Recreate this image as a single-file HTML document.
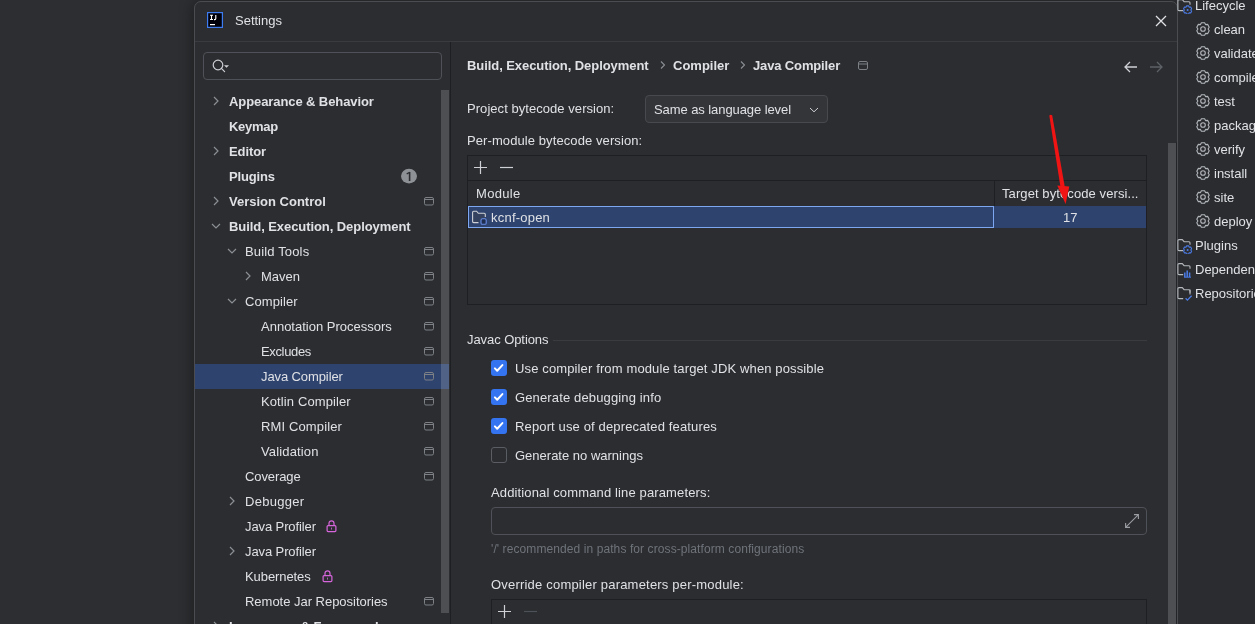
<!DOCTYPE html>
<html><head><meta charset="utf-8">
<style>
*{box-sizing:border-box;margin:0;padding:0}
html,body{width:1255px;height:624px;overflow:hidden;-webkit-font-smoothing:antialiased;background:#2c2e31;font-family:"Liberation Sans",sans-serif;font-size:13px;color:#dfe1e5;position:relative}
.a{position:absolute;white-space:nowrap}
.t{position:absolute;white-space:nowrap;line-height:16px;will-change:transform}
.b{font-weight:bold}
</style></head><body>
<div class="a" style="left:194px;top:1px;width:984px;height:680px;background:#2b2d30;border:1px solid #4a4c51;border-radius:7px;box-shadow:-2px 0 14px rgba(0,0,0,0.32)"></div>

<!-- title -->
<svg class="a" style="left:207px;top:12px" width="16" height="16" viewBox="0 0 16 16"><rect x="0.6" y="0.6" width="14.8" height="14.8" fill="#00000a" stroke="#3d7cf0" stroke-width="1.2"/><path d="M3 3.2H6M4.5 3.2V7.5M3 7.5H6M8.8 3V6.6Q8.8 7.6 7.8 7.6H7" fill="none" stroke="#fff" stroke-width="1.1"/><rect x="3" y="12" width="5" height="1.2" fill="#fff"/></svg>
<div class="t" style="left:235px;top:13px">Settings</div>
<svg class="a" style="left:1155px;top:15px" width="12" height="12" viewBox="0 0 12 12"><path d="M1 1L11 11M11 1L1 11" stroke="#dfe1e5" stroke-width="1.3"/></svg>
<div class="a" style="left:195px;top:41px;width:982px;height:1px;background:#393b40"></div>

<!-- left panel -->
<div class="a" style="left:203px;top:52px;width:239px;height:28px;border:1px solid #4e5157;border-radius:4px"></div>
<svg class="a" style="left:212px;top:58px" width="20" height="16" viewBox="0 0 20 16"><circle cx="6" cy="7" r="4.8" fill="none" stroke="#ced0d6" stroke-width="1.2"/><path d="M9.4 10.4L12.6 13.6" stroke="#ced0d6" stroke-width="1.2" stroke-linecap="round"/><path d="M12 7.3H17L14.5 9.8Z" fill="#ced0d6"/></svg>
<svg class="a" style="left:212px;top:95px" width="8" height="12" viewBox="0 0 8 12"><path d="M2 2L6 6L2 10" fill="none" stroke="#8c8f94" stroke-width="1.2"/></svg>
<div class="t b" style="left:229px;top:94px;letter-spacing:-0.09px">Appearance &amp; Behavior</div>
<div class="t b" style="left:229px;top:119px;letter-spacing:-0.3px">Keymap</div>
<svg class="a" style="left:212px;top:145px" width="8" height="12" viewBox="0 0 8 12"><path d="M2 2L6 6L2 10" fill="none" stroke="#8c8f94" stroke-width="1.2"/></svg>
<div class="t b" style="left:229px;top:144px;letter-spacing:-0.08px">Editor</div>
<div class="t b" style="left:229px;top:169px;letter-spacing:-0.15px">Plugins</div>
<svg class="a" style="left:401px;top:168px" width="16" height="16" viewBox="0 0 16 16"><ellipse cx="8" cy="8.1" rx="8" ry="7.3" fill="#8e9196"/><path d="M8.6 4V13" stroke="#2b2d30" stroke-width="1.6"/><path d="M5.7 5.9L8.9 4.2" stroke="#2b2d30" stroke-width="1.2"/></svg>
<svg class="a" style="left:212px;top:195px" width="8" height="12" viewBox="0 0 8 12"><path d="M2 2L6 6L2 10" fill="none" stroke="#8c8f94" stroke-width="1.2"/></svg>
<div class="t b" style="left:229px;top:194px">Version Control</div>
<svg class="a" style="left:424px;top:197px" width="10" height="9" viewBox="0 0 10 9"><rect x="0.5" y="0.5" width="9" height="7.5" rx="1.5" fill="none" stroke="#7d8085" stroke-width="1"/><path d="M0.5 2.5H9.5" stroke="#7d8085" stroke-width="1"/></svg>
<svg class="a" style="left:210px;top:222px" width="12" height="8" viewBox="0 0 12 8"><path d="M2 2L6 6L10 2" fill="none" stroke="#8c8f94" stroke-width="1.2"/></svg>
<div class="t b" style="left:229px;top:219px;letter-spacing:-0.07px">Build, Execution, Deployment</div>
<svg class="a" style="left:226px;top:247px" width="12" height="8" viewBox="0 0 12 8"><path d="M2 2L6 6L10 2" fill="none" stroke="#8c8f94" stroke-width="1.2"/></svg>
<div class="t" style="left:245px;top:244px;letter-spacing:0.15px">Build Tools</div>
<svg class="a" style="left:424px;top:247px" width="10" height="9" viewBox="0 0 10 9"><rect x="0.5" y="0.5" width="9" height="7.5" rx="1.5" fill="none" stroke="#7d8085" stroke-width="1"/><path d="M0.5 2.5H9.5" stroke="#7d8085" stroke-width="1"/></svg>
<svg class="a" style="left:244px;top:270px" width="8" height="12" viewBox="0 0 8 12"><path d="M2 2L6 6L2 10" fill="none" stroke="#8c8f94" stroke-width="1.2"/></svg>
<div class="t" style="left:261px;top:269px">Maven</div>
<svg class="a" style="left:424px;top:272px" width="10" height="9" viewBox="0 0 10 9"><rect x="0.5" y="0.5" width="9" height="7.5" rx="1.5" fill="none" stroke="#7d8085" stroke-width="1"/><path d="M0.5 2.5H9.5" stroke="#7d8085" stroke-width="1"/></svg>
<svg class="a" style="left:226px;top:297px" width="12" height="8" viewBox="0 0 12 8"><path d="M2 2L6 6L10 2" fill="none" stroke="#8c8f94" stroke-width="1.2"/></svg>
<div class="t" style="left:245px;top:294px;letter-spacing:0.08px">Compiler</div>
<svg class="a" style="left:424px;top:297px" width="10" height="9" viewBox="0 0 10 9"><rect x="0.5" y="0.5" width="9" height="7.5" rx="1.5" fill="none" stroke="#7d8085" stroke-width="1"/><path d="M0.5 2.5H9.5" stroke="#7d8085" stroke-width="1"/></svg>
<div class="t" style="left:261px;top:319px">Annotation Processors</div>
<svg class="a" style="left:424px;top:322px" width="10" height="9" viewBox="0 0 10 9"><rect x="0.5" y="0.5" width="9" height="7.5" rx="1.5" fill="none" stroke="#7d8085" stroke-width="1"/><path d="M0.5 2.5H9.5" stroke="#7d8085" stroke-width="1"/></svg>
<div class="t" style="left:261px;top:344px;letter-spacing:-0.35px">Excludes</div>
<svg class="a" style="left:424px;top:347px" width="10" height="9" viewBox="0 0 10 9"><rect x="0.5" y="0.5" width="9" height="7.5" rx="1.5" fill="none" stroke="#7d8085" stroke-width="1"/><path d="M0.5 2.5H9.5" stroke="#7d8085" stroke-width="1"/></svg>
<div class="a" style="left:195px;top:364px;width:254px;height:25px;background:#2e436e"></div>
<div class="t" style="left:261px;top:369px;letter-spacing:-0.1px">Java Compiler</div>
<svg class="a" style="left:424px;top:372px" width="10" height="9" viewBox="0 0 10 9"><rect x="0.5" y="0.5" width="9" height="7.5" rx="1.5" fill="none" stroke="#7d8085" stroke-width="1"/><path d="M0.5 2.5H9.5" stroke="#7d8085" stroke-width="1"/></svg>
<div class="t" style="left:261px;top:394px;letter-spacing:0.11px">Kotlin Compiler</div>
<svg class="a" style="left:424px;top:397px" width="10" height="9" viewBox="0 0 10 9"><rect x="0.5" y="0.5" width="9" height="7.5" rx="1.5" fill="none" stroke="#7d8085" stroke-width="1"/><path d="M0.5 2.5H9.5" stroke="#7d8085" stroke-width="1"/></svg>
<div class="t" style="left:261px;top:419px;letter-spacing:0.13px">RMI Compiler</div>
<svg class="a" style="left:424px;top:422px" width="10" height="9" viewBox="0 0 10 9"><rect x="0.5" y="0.5" width="9" height="7.5" rx="1.5" fill="none" stroke="#7d8085" stroke-width="1"/><path d="M0.5 2.5H9.5" stroke="#7d8085" stroke-width="1"/></svg>
<div class="t" style="left:261px;top:444px;letter-spacing:0.14px">Validation</div>
<svg class="a" style="left:424px;top:447px" width="10" height="9" viewBox="0 0 10 9"><rect x="0.5" y="0.5" width="9" height="7.5" rx="1.5" fill="none" stroke="#7d8085" stroke-width="1"/><path d="M0.5 2.5H9.5" stroke="#7d8085" stroke-width="1"/></svg>
<div class="t" style="left:245px;top:469px;letter-spacing:-0.1px">Coverage</div>
<svg class="a" style="left:424px;top:472px" width="10" height="9" viewBox="0 0 10 9"><rect x="0.5" y="0.5" width="9" height="7.5" rx="1.5" fill="none" stroke="#7d8085" stroke-width="1"/><path d="M0.5 2.5H9.5" stroke="#7d8085" stroke-width="1"/></svg>
<svg class="a" style="left:228px;top:495px" width="8" height="12" viewBox="0 0 8 12"><path d="M2 2L6 6L2 10" fill="none" stroke="#8c8f94" stroke-width="1.2"/></svg>
<div class="t" style="left:245px;top:494px;letter-spacing:0.3px">Debugger</div>
<div class="t" style="left:245px;top:519px;letter-spacing:-0.1px">Java Profiler</div>
<svg class="a" style="left:326px;top:520px" width="11" height="13" viewBox="0 0 11 13"><path d="M3 5.5V3.3a2.5 2.5 0 0 1 5 0V5.5" fill="none" stroke="#d765dc" stroke-width="1.2"/><rect x="1.1" y="5.6" width="8.8" height="6" rx="1" fill="none" stroke="#d765dc" stroke-width="1.2"/><rect x="5" y="7.6" width="1" height="2" fill="#b05ab8"/></svg>
<svg class="a" style="left:228px;top:545px" width="8" height="12" viewBox="0 0 8 12"><path d="M2 2L6 6L2 10" fill="none" stroke="#8c8f94" stroke-width="1.2"/></svg>
<div class="t" style="left:245px;top:544px;letter-spacing:-0.1px">Java Profiler</div>
<div class="t" style="left:245px;top:569px;letter-spacing:-0.08px">Kubernetes</div>
<svg class="a" style="left:322px;top:570px" width="11" height="13" viewBox="0 0 11 13"><path d="M3 5.5V3.3a2.5 2.5 0 0 1 5 0V5.5" fill="none" stroke="#d765dc" stroke-width="1.2"/><rect x="1.1" y="5.6" width="8.8" height="6" rx="1" fill="none" stroke="#d765dc" stroke-width="1.2"/><rect x="5" y="7.6" width="1" height="2" fill="#b05ab8"/></svg>
<div class="t" style="left:245px;top:594px;letter-spacing:-0.02px">Remote Jar Repositories</div>
<svg class="a" style="left:424px;top:597px" width="10" height="9" viewBox="0 0 10 9"><rect x="0.5" y="0.5" width="9" height="7.5" rx="1.5" fill="none" stroke="#7d8085" stroke-width="1"/><path d="M0.5 2.5H9.5" stroke="#7d8085" stroke-width="1"/></svg>
<svg class="a" style="left:212px;top:620px" width="8" height="12" viewBox="0 0 8 12"><path d="M2 2L6 6L2 10" fill="none" stroke="#8c8f94" stroke-width="1.2"/></svg>
<div class="t b" style="left:229px;top:619px;letter-spacing:-0.07px">Languages &amp; Frameworks</div>
<div class="a" style="left:441px;top:90px;width:8px;height:523px;background:rgba(255,255,255,0.165)"></div>
<div class="a" style="left:450px;top:42px;width:1px;height:582px;background:#1e1f22"></div>

<!-- right panel -->
<div class="t b" style="left:467px;top:58px;letter-spacing:-0.07px">Build, Execution, Deployment</div>
<svg class="a" style="left:659px;top:59px" width="8" height="12" viewBox="0 0 8 12"><path d="M2 2.5L5.5 6L2 9.5" fill="none" stroke="#8c8f94" stroke-width="1.1"/></svg>
<div class="t b" style="left:673px;top:58px">Compiler</div>
<svg class="a" style="left:739px;top:59px" width="8" height="12" viewBox="0 0 8 12"><path d="M2 2.5L5.5 6L2 9.5" fill="none" stroke="#8c8f94" stroke-width="1.1"/></svg>
<div class="t b" style="left:753px;top:58px;letter-spacing:-0.14px">Java Compiler</div>
<svg class="a" style="left:858px;top:61px" width="10" height="9" viewBox="0 0 10 9"><rect x="0.5" y="0.5" width="9" height="8" rx="1.5" fill="none" stroke="#7d8085" stroke-width="1"/><path d="M0.5 3H9.5" stroke="#7d8085" stroke-width="1"/></svg>
<svg class="a" style="left:1123px;top:60px" width="15" height="14" viewBox="0 0 15 14"><path d="M2 7H14M7 2L2 7L7 12" fill="none" stroke="#ced0d6" stroke-width="1.3"/></svg>
<svg class="a" style="left:1149px;top:60px" width="15" height="14" viewBox="0 0 15 14"><path d="M1 7H13M8 2L13 7L8 12" fill="none" stroke="#5e6166" stroke-width="1.3"/></svg>

<div class="t" style="left:467px;top:101px;letter-spacing:0.05px">Project bytecode version:</div>
<div class="a" style="left:645px;top:95px;width:183px;height:28px;border:1px solid #47494e;border-radius:4px;background:#333539"></div>
<div class="t" style="left:654px;top:102px;letter-spacing:-0.08px">Same as language level</div>
<svg class="a" style="left:808px;top:106px" width="12" height="8" viewBox="0 0 12 8"><path d="M2 2L6 5.8L10 2" fill="none" stroke="#ced0d6" stroke-width="1"/></svg>

<div class="t" style="left:467px;top:133px;letter-spacing:0.09px">Per-module bytecode version:</div>
<div class="a" style="left:467px;top:155px;width:680px;height:150px;border:1px solid #1e1f22"></div>
<svg class="a" style="left:473px;top:160px" width="15" height="15" viewBox="0 0 15 15"><path d="M7.5 1V14M1 7.5H14" stroke="#ced0d6" stroke-width="1.2"/></svg>
<svg class="a" style="left:499px;top:160px" width="15" height="15" viewBox="0 0 15 15"><path d="M1 7.5H14" stroke="#ced0d6" stroke-width="1.2"/></svg>
<div class="a" style="left:468px;top:180px;width:678px;height:1px;background:#1e1f22"></div>
<div class="t" style="left:476px;top:186px;letter-spacing:0.3px">Module</div>
<div class="a" style="left:994px;top:181px;width:1px;height:25px;background:#1e1f22"></div>
<div class="t" style="left:1002px;top:186px;letter-spacing:0.09px">Target bytecode versi...</div>
<div class="a" style="left:468px;top:206px;width:678px;height:22px;background:#2e436e"></div>
<div class="a" style="left:468px;top:206px;width:526px;height:22px;border:1px solid #7ea7f2"></div>
<svg class="a" style="left:471px;top:209px" width="16" height="16" viewBox="0 0 16 16"><path d="M7.5 13.6H2.6Q1.6 13.6 1.6 12.6V3.2Q1.6 2.2 2.6 2.2H5.6L7.3 4.3H13.2Q14.3 4.3 14.3 5.3V8" fill="#34425f" stroke="#ced0d6" stroke-width="1.1"/><rect x="10" y="9.8" width="5.2" height="5.5" rx="1.4" fill="#1f2d4f" stroke="#6a8fe8" stroke-width="1.1"/></svg>
<div class="t" style="left:491px;top:210px;letter-spacing:0.22px">kcnf-open</div>
<div class="t" style="left:1063px;top:210px">17</div>

<div class="t" style="left:467px;top:332px;letter-spacing:-0.07px">Javac Options</div>
<div class="a" style="left:553px;top:340px;width:594px;height:1px;background:#393b40"></div>
<div class="a" style="left:491px;top:360px;width:16px;height:16px;border-radius:3px;background:#3574f0"><svg width="16" height="16" viewBox="0 0 16 16" style="position:absolute;left:0;top:0"><path d="M3.9 8.4L6.2 10.7L11.4 5.1" fill="none" stroke="#fff" stroke-width="2" stroke-linecap="round" stroke-linejoin="round"/></svg></div>
<div class="t" style="left:515px;top:361px;letter-spacing:0.13px">Use compiler from module target JDK when possible</div>
<div class="a" style="left:491px;top:389px;width:16px;height:16px;border-radius:3px;background:#3574f0"><svg width="16" height="16" viewBox="0 0 16 16" style="position:absolute;left:0;top:0"><path d="M3.9 8.4L6.2 10.7L11.4 5.1" fill="none" stroke="#fff" stroke-width="2" stroke-linecap="round" stroke-linejoin="round"/></svg></div>
<div class="t" style="left:515px;top:390px;letter-spacing:0.14px">Generate debugging info</div>
<div class="a" style="left:491px;top:418px;width:16px;height:16px;border-radius:3px;background:#3574f0"><svg width="16" height="16" viewBox="0 0 16 16" style="position:absolute;left:0;top:0"><path d="M3.9 8.4L6.2 10.7L11.4 5.1" fill="none" stroke="#fff" stroke-width="2" stroke-linecap="round" stroke-linejoin="round"/></svg></div>
<div class="t" style="left:515px;top:419px;letter-spacing:0.14px">Report use of deprecated features</div>
<div class="a" style="left:491px;top:447px;width:16px;height:16px;border-radius:3px;border:1px solid #5a5d63"></div>
<div class="t" style="left:515px;top:448px">Generate no warnings</div>

<div class="t" style="left:491px;top:485px;letter-spacing:0.137px">Additional command line parameters:</div>
<div class="a" style="left:491px;top:507px;width:656px;height:28px;border:1px solid #4e5157;border-radius:4px"></div>
<svg class="a" style="left:1124px;top:513px" width="16" height="16" viewBox="0 0 16 16"><path d="M10 1.6H14.4V6M14.4 1.6L1.6 14.4M1.6 10V14.4H6" fill="none" stroke="#9a9da2" stroke-width="1.1"/></svg>
<div class="t" style="left:491px;top:541px;font-size:12px;color:#6f737a;letter-spacing:0.09px">'/' recommended in paths for cross-platform configurations</div>
<div class="t" style="left:491px;top:577px;letter-spacing:0.2px">Override compiler parameters per-module:</div>
<div class="a" style="left:491px;top:599px;width:656px;height:60px;border:1px solid #1e1f22"></div>
<svg class="a" style="left:497px;top:604px" width="15" height="15" viewBox="0 0 15 15"><path d="M7.5 1V14M1 7.5H14" stroke="#ced0d6" stroke-width="1.2"/></svg>
<svg class="a" style="left:523px;top:604px" width="15" height="15" viewBox="0 0 15 15"><path d="M1 7.5H14" stroke="#4e5157" stroke-width="1.2"/></svg>

<div class="a" style="left:1168px;top:143px;width:8px;height:481px;background:#4d4f53"></div>

<div class="a" style="left:1178px;top:0;width:77px;height:624px;background:#2a2c2f"></div><div class="a" style="left:1177px;top:0;width:1px;height:624px;background:#4a4c51"></div><div class="a" style="left:1176px;top:142px;width:1px;height:482px;background:#232427"></div>
<svg class="a" style="left:1177px;top:-2px" width="16" height="16" viewBox="0 0 16 16"><path d="M6.2 12.6H2Q0.9 12.6 0.9 11.5V2.6Q0.9 1.6 2 1.6H5.3L7.1 3.7H12Q13 3.7 13 4.7V6.8" fill="none" stroke="#b4b7bc" stroke-width="1.1"/><path d="M9.6 7.9L11.6 7.9L12.1 9.1L13.7 9.1L14.6 10.8L13.8 12L14.6 13.2L13.7 14.9L12.1 14.9L11.6 16.1L9.6 16.1L9.1 14.9L7.5 14.9L6.6 13.2L7.4 12L6.6 10.8L7.5 9.1L9.1 9.1Z" fill="#2b2d30" stroke="#4b7be5" stroke-width="1.1" stroke-linejoin="round"/><circle cx="10.6" cy="12" r="1" fill="#4b7be5"/></svg>
<div class="t" style="left:1195px;top:-2px">Lifecycle</div>
<svg class="a" style="left:1195px;top:21px" width="16" height="16" viewBox="-1 -1 16 16"><path d="M5.40 0.75L8.60 0.75L9.55 2.58L11.75 2.42L13.2 5.18L12.10 7.00L13.2 8.82L11.75 11.58L9.55 11.42L8.60 13.25L5.40 13.25L4.45 11.42L2.25 11.58L0.8 8.82L1.90 7.00L0.8 5.18L2.25 2.42L4.45 2.58Z" fill="none" stroke="#b4b7bc" stroke-width="1.1" stroke-linejoin="round"/><circle cx="7" cy="7" r="2.3" fill="none" stroke="#b4b7bc" stroke-width="1.1"/></svg>
<div class="t" style="left:1214px;top:22px">clean</div>
<svg class="a" style="left:1195px;top:45px" width="16" height="16" viewBox="-1 -1 16 16"><path d="M5.40 0.75L8.60 0.75L9.55 2.58L11.75 2.42L13.2 5.18L12.10 7.00L13.2 8.82L11.75 11.58L9.55 11.42L8.60 13.25L5.40 13.25L4.45 11.42L2.25 11.58L0.8 8.82L1.90 7.00L0.8 5.18L2.25 2.42L4.45 2.58Z" fill="none" stroke="#b4b7bc" stroke-width="1.1" stroke-linejoin="round"/><circle cx="7" cy="7" r="2.3" fill="none" stroke="#b4b7bc" stroke-width="1.1"/></svg>
<div class="t" style="left:1214px;top:46px">validate</div>
<svg class="a" style="left:1195px;top:69px" width="16" height="16" viewBox="-1 -1 16 16"><path d="M5.40 0.75L8.60 0.75L9.55 2.58L11.75 2.42L13.2 5.18L12.10 7.00L13.2 8.82L11.75 11.58L9.55 11.42L8.60 13.25L5.40 13.25L4.45 11.42L2.25 11.58L0.8 8.82L1.90 7.00L0.8 5.18L2.25 2.42L4.45 2.58Z" fill="none" stroke="#b4b7bc" stroke-width="1.1" stroke-linejoin="round"/><circle cx="7" cy="7" r="2.3" fill="none" stroke="#b4b7bc" stroke-width="1.1"/></svg>
<div class="t" style="left:1214px;top:70px">compile</div>
<svg class="a" style="left:1195px;top:93px" width="16" height="16" viewBox="-1 -1 16 16"><path d="M5.40 0.75L8.60 0.75L9.55 2.58L11.75 2.42L13.2 5.18L12.10 7.00L13.2 8.82L11.75 11.58L9.55 11.42L8.60 13.25L5.40 13.25L4.45 11.42L2.25 11.58L0.8 8.82L1.90 7.00L0.8 5.18L2.25 2.42L4.45 2.58Z" fill="none" stroke="#b4b7bc" stroke-width="1.1" stroke-linejoin="round"/><circle cx="7" cy="7" r="2.3" fill="none" stroke="#b4b7bc" stroke-width="1.1"/></svg>
<div class="t" style="left:1214px;top:94px">test</div>
<svg class="a" style="left:1195px;top:117px" width="16" height="16" viewBox="-1 -1 16 16"><path d="M5.40 0.75L8.60 0.75L9.55 2.58L11.75 2.42L13.2 5.18L12.10 7.00L13.2 8.82L11.75 11.58L9.55 11.42L8.60 13.25L5.40 13.25L4.45 11.42L2.25 11.58L0.8 8.82L1.90 7.00L0.8 5.18L2.25 2.42L4.45 2.58Z" fill="none" stroke="#b4b7bc" stroke-width="1.1" stroke-linejoin="round"/><circle cx="7" cy="7" r="2.3" fill="none" stroke="#b4b7bc" stroke-width="1.1"/></svg>
<div class="t" style="left:1214px;top:118px">package</div>
<svg class="a" style="left:1195px;top:141px" width="16" height="16" viewBox="-1 -1 16 16"><path d="M5.40 0.75L8.60 0.75L9.55 2.58L11.75 2.42L13.2 5.18L12.10 7.00L13.2 8.82L11.75 11.58L9.55 11.42L8.60 13.25L5.40 13.25L4.45 11.42L2.25 11.58L0.8 8.82L1.90 7.00L0.8 5.18L2.25 2.42L4.45 2.58Z" fill="none" stroke="#b4b7bc" stroke-width="1.1" stroke-linejoin="round"/><circle cx="7" cy="7" r="2.3" fill="none" stroke="#b4b7bc" stroke-width="1.1"/></svg>
<div class="t" style="left:1214px;top:142px">verify</div>
<svg class="a" style="left:1195px;top:165px" width="16" height="16" viewBox="-1 -1 16 16"><path d="M5.40 0.75L8.60 0.75L9.55 2.58L11.75 2.42L13.2 5.18L12.10 7.00L13.2 8.82L11.75 11.58L9.55 11.42L8.60 13.25L5.40 13.25L4.45 11.42L2.25 11.58L0.8 8.82L1.90 7.00L0.8 5.18L2.25 2.42L4.45 2.58Z" fill="none" stroke="#b4b7bc" stroke-width="1.1" stroke-linejoin="round"/><circle cx="7" cy="7" r="2.3" fill="none" stroke="#b4b7bc" stroke-width="1.1"/></svg>
<div class="t" style="left:1214px;top:166px">install</div>
<svg class="a" style="left:1195px;top:189px" width="16" height="16" viewBox="-1 -1 16 16"><path d="M5.40 0.75L8.60 0.75L9.55 2.58L11.75 2.42L13.2 5.18L12.10 7.00L13.2 8.82L11.75 11.58L9.55 11.42L8.60 13.25L5.40 13.25L4.45 11.42L2.25 11.58L0.8 8.82L1.90 7.00L0.8 5.18L2.25 2.42L4.45 2.58Z" fill="none" stroke="#b4b7bc" stroke-width="1.1" stroke-linejoin="round"/><circle cx="7" cy="7" r="2.3" fill="none" stroke="#b4b7bc" stroke-width="1.1"/></svg>
<div class="t" style="left:1214px;top:190px">site</div>
<svg class="a" style="left:1195px;top:213px" width="16" height="16" viewBox="-1 -1 16 16"><path d="M5.40 0.75L8.60 0.75L9.55 2.58L11.75 2.42L13.2 5.18L12.10 7.00L13.2 8.82L11.75 11.58L9.55 11.42L8.60 13.25L5.40 13.25L4.45 11.42L2.25 11.58L0.8 8.82L1.90 7.00L0.8 5.18L2.25 2.42L4.45 2.58Z" fill="none" stroke="#b4b7bc" stroke-width="1.1" stroke-linejoin="round"/><circle cx="7" cy="7" r="2.3" fill="none" stroke="#b4b7bc" stroke-width="1.1"/></svg>
<div class="t" style="left:1214px;top:214px">deploy</div>
<svg class="a" style="left:1177px;top:238px" width="16" height="16" viewBox="0 0 16 16"><path d="M6.2 12.6H2Q0.9 12.6 0.9 11.5V2.6Q0.9 1.6 2 1.6H5.3L7.1 3.7H12Q13 3.7 13 4.7V6.8" fill="none" stroke="#b4b7bc" stroke-width="1.1"/><path d="M9.6 7.9L11.6 7.9L12.1 9.1L13.7 9.1L14.6 10.8L13.8 12L14.6 13.2L13.7 14.9L12.1 14.9L11.6 16.1L9.6 16.1L9.1 14.9L7.5 14.9L6.6 13.2L7.4 12L6.6 10.8L7.5 9.1L9.1 9.1Z" fill="#2b2d30" stroke="#4b7be5" stroke-width="1.1" stroke-linejoin="round"/><circle cx="10.6" cy="12" r="1" fill="#4b7be5"/></svg>
<div class="t" style="left:1195px;top:238px">Plugins</div>
<svg class="a" style="left:1177px;top:262px" width="16" height="16" viewBox="0 0 16 16"><path d="M6.2 12.6H2Q0.9 12.6 0.9 11.5V2.6Q0.9 1.6 2 1.6H5.3L7.1 3.7H12Q13 3.7 13 4.7V6.8" fill="none" stroke="#b4b7bc" stroke-width="1.1"/><path d="M7.8 15V10.5M10.2 15V8.5M12.6 15V10.5" stroke="#4b7be5" stroke-width="1.5"/><path d="M7 15.2H14" stroke="#4b7be5" stroke-width="1"/></svg>
<div class="t" style="left:1195px;top:262px">Dependencies</div>
<svg class="a" style="left:1177px;top:286px" width="16" height="16" viewBox="0 0 16 16"><path d="M6.2 12.6H2Q0.9 12.6 0.9 11.5V2.6Q0.9 1.6 2 1.6H5.3L7.1 3.7H12Q13 3.7 13 4.7V6.8" fill="none" stroke="#b4b7bc" stroke-width="1.1"/><path d="M8.6 12.3L10.4 14.1L14.6 9.8" fill="none" stroke="#4b7be5" stroke-width="1.3"/><path d="M13 3.5V8.5" stroke="#b4b7bc" stroke-width="1.1"/></svg>
<div class="t" style="left:1195px;top:286px">Repositories</div>

<!-- red arrow -->
<svg class="a" style="left:1040px;top:110px" width="40" height="100" viewBox="1040 110 40 100"><path d="M1049.3 115.5Q1050.6 114 1052.2 115.2L1065 188L1060.6 188Z" fill="#f01414"/><path d="M1057.3 185.5L1069.3 186.5L1065.6 204Z" fill="#f01414"/></svg>
</body></html>
